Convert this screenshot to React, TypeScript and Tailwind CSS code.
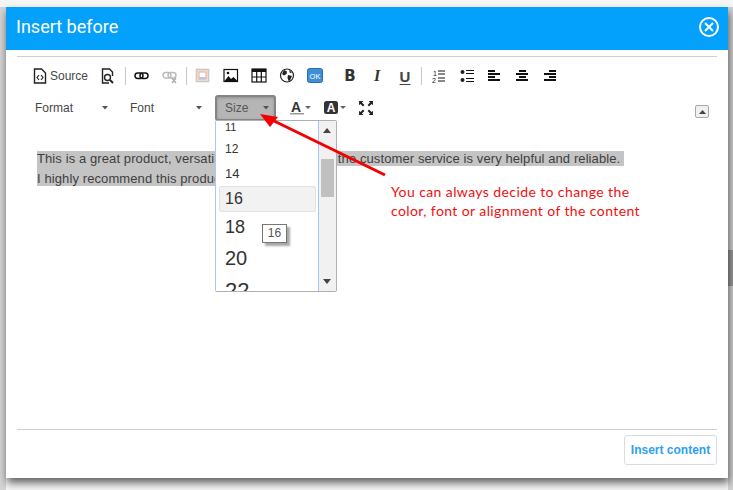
import React from "react";

const sans = "font-['Liberation_Sans',Arial,sans-serif]";

function Caret({ className = "" }: { className?: string }) {
  return (
    <svg width="7" height="4" viewBox="0 0 7 4" className={className}>
      <path d="M0 0h6L3 3.5z" fill="#555" />
    </svg>
  );
}

function Sep({ x }: { x: number }) {
  return <span className="w-px h-[18px] bg-[#c9c9c9] shrink-0" style={{ marginLeft: x }} />;
}

function Ic({ x, children, w = 16 }: { x: number; children: React.ReactNode; w?: number }) {
  return (
    <svg width={w} height="16" viewBox={`0 0 ${w} 16`} style={{ marginLeft: x }} className="shrink-0">
      {children}
    </svg>
  );
}

function Align({ x, rows }: { x: number; rows: [number, number][] }) {
  return (
    <Ic x={x} w={13}>
      {rows.map(([a, b], i) => (
        <rect key={i} x={a} y={2 + i * 3} width={b} height="2" fill="#111" />
      ))}
    </Ic>
  );
}

export default function App() {
  return (
    <div className={`relative w-[733px] h-[490px] overflow-hidden bg-[#f6f6f6] ${sans}`}>
      <div className="absolute left-0 top-[7px] bottom-0 w-[6px] bg-[#d4d4d4]" />
      <div className="absolute right-0 top-[7px] bottom-0 w-[5px] bg-[#d2d2d2]" />
      <div className="absolute right-0 top-[250px] h-[36px] w-[5px] bg-[#9a9a9a]" />
      <div className="pt-[7px] pl-[6px]">
        <div className="relative w-[722px] h-[471px] flex flex-col bg-white shadow-[1px_5px_8px_rgba(0,0,0,0.6)]">
          <div className="h-[43px] bg-[#03a1fb] flex items-center justify-between pl-[10px] pr-[8px] shrink-0">
            <span className="text-white text-[18px] font-['Roboto',sans-serif] -mt-[4px]">Insert before</span>
            <svg width="22" height="22" viewBox="0 0 22 22" className="-mt-[3px]">
              <circle cx="11" cy="11" r="9" fill="none" stroke="#fff" strokeWidth="2" />
              <path d="M7 7l8 8M15 7l-8 8" stroke="#fff" strokeWidth="2" />
            </svg>
          </div>
          <div className="flex-1 flex flex-col mx-[11px] min-h-0">
            <div className="mt-[6px] h-px bg-[#cfcfcf] shrink-0" />
            <div className="flex items-center h-[20px] mt-[9px] pl-[15px] shrink-0">
              <Ic x={0}>
                <path d="M2.500 1h7l4 4v10h-11z" fill="none" stroke="#222" strokeWidth="1.400" />
                <path d="M7 7L5 9.500 7 12M9 7l2 2.500L9 12" fill="none" stroke="#222" strokeWidth="1.200" />
              </Ic>
              <span className="ml-[2px] w-[38px] text-[12px] text-[#474747]">Source</span>
              <Ic x={12}>
                <path d="M9 15H2.500V1h7l3 3v4" fill="none" stroke="#222" strokeWidth="1.400" />
                <circle cx="7.500" cy="9.500" r="3" fill="none" stroke="#222" strokeWidth="1.400" />
                <path d="M10 12l3 3" stroke="#222" strokeWidth="2" />
              </Ic>
              <Sep x={9} />
              <Ic x={8}>
                <rect x="1" y="5" width="8" height="5.500" rx="2.700" fill="none" stroke="#111" strokeWidth="1.500" />
                <rect x="6" y="5" width="8" height="5.500" rx="2.700" fill="none" stroke="#111" strokeWidth="1.500" />
              </Ic>
              <Ic x={12}>
                <rect x="1" y="4.500" width="8" height="5.500" rx="2.700" fill="none" stroke="#bbb" strokeWidth="1.400" />
                <rect x="6" y="4.500" width="8" height="5.500" rx="2.700" fill="none" stroke="#bbb" strokeWidth="1.400" />
                <path d="M10 10l4 5M14 10l-4 5" stroke="#aaa" strokeWidth="1.300" />
              </Ic>
              <Sep x={8} />
              <Ic x={8}>
                <rect x="1.500" y="1.500" width="12" height="12" fill="#fbe3d0" stroke="#c8c8c8" strokeWidth="1.600" />
                <rect x="4" y="4" width="7" height="7" fill="#fff" stroke="#f2a49a" />
                <path d="M4 9h7v2H4z" fill="#a8cdea" />
              </Ic>
              <Ic x={12}>
                <rect x="1" y="1.500" width="13.500" height="12" fill="#fff" stroke="#111" strokeWidth="1.200" />
                <path d="M1.500 13l4-5 2.500 3 2.500-2 4 4z" fill="#111" />
                <circle cx="5" cy="5" r="1.300" fill="#111" />
              </Ic>
              <Ic x={12}>
                <rect x="1" y="1" width="14" height="13" fill="#fff" stroke="#111" strokeWidth="1.200" />
                <rect x="1" y="1" width="14" height="3" fill="#111" />
                <path d="M5.700 4v10M10.300 4v10M1 9h14" stroke="#111" strokeWidth="1.200" />
              </Ic>
              <Ic x={12}>
                <circle cx="8" cy="7.500" r="6.500" fill="#fff" stroke="#222" strokeWidth="1.200" />
                <path d="M5 2l3 1.500-.5 2.500L5 7.500 3 6zM9 7l4 1-2 4.500-1.500.5-1-3zM10 2l3 2.500-2 .5z" fill="#222" />
              </Ic>
              <Ic x={12}>
                <rect x="0.500" y="0.500" width="15" height="14" rx="2" fill="#3f8fd6" stroke="#2a6fb0" />
                <text x="8" y="10.500" textAnchor="middle" fontSize="7.500" fill="#fff" fontFamily="Liberation Sans">OK</text>
              </Ic>
              <span className="ml-[19px] w-[16px] text-center text-[15px] leading-none font-bold text-[#333] font-['DejaVu_Sans',sans-serif]">B</span>
              <span className="ml-[11px] w-[16px] text-center text-[16px] leading-none font-bold italic text-[#333] font-['Liberation_Serif',serif]">I</span>
              <span className="ml-[12px] w-[16px] text-center text-[15px] leading-none font-bold text-[#444] underline underline-offset-2">U</span>
              <Sep x={8} />
              <Ic x={10} w={14}>
                <text x="1" y="7.500" fontSize="7" fill="#111" fontFamily="Liberation Sans">1</text>
                <text x="0" y="15" fontSize="7" fill="#111" fontFamily="Liberation Sans">2</text>
                <path d="M6 3h7M6 6h7M6 10h7M6 13h7" stroke="#111" strokeWidth="1" />
              </Ic>
              <Ic x={14} w={14}>
                <circle cx="2.500" cy="4" r="2" fill="#222" />
                <circle cx="2.500" cy="12" r="2" fill="#222" />
                <path d="M6 2.500h8M6 5.500h8M6 10.500h8M6 13.500h8" stroke="#111" strokeWidth="1" />
              </Ic>
              <Align x={14} rows={[[0, 7], [0, 12], [0, 7], [0, 12]]} />
              <Align x={15} rows={[[3, 7], [0, 12], [3, 7], [0, 12]]} />
              <Align x={15} rows={[[5, 7], [0, 12], [5, 7], [0, 12]]} />
            </div>
            <div className="relative flex items-center h-[25px] mt-[9px] pl-[18px] shrink-0 text-[12px] text-[#474747]">
              <span className="w-[67px]">Format</span>
              <Caret />
              <span className="ml-[21px] w-[66px]">Font</span>
              <Caret />
              <div className="ml-[12px] w-[61px] h-[26px] rounded-[3px] border-[2px] border-[#848484] bg-[#b5b5b5] flex items-center pl-[8px] gap-[15px] shadow-[inset_0_1px_3px_rgba(0,0,0,0.2)]">
                <span className="text-[#555]">Size</span>
                <Caret />
              </div>
              <svg width="24" height="16" viewBox="0 0 24 16" className="ml-[14px]">
                <text x="1" y="11.500" fontSize="14" fontWeight="700" fill="#333" fontFamily="Liberation Sans">A</text>
                <rect x="0" y="13" width="14" height="1.500" fill="#999" />
                <path d="M15 6h6l-3 3z" fill="#666" />
              </svg>
              <svg width="26" height="16" viewBox="0 0 26 16" className="ml-[10px]">
                <rect x="0" y="1" width="14" height="13" rx="2.500" fill="#333" />
                <text x="7" y="12" textAnchor="middle" fontSize="12" fontWeight="700" fill="#fff" fontFamily="Liberation Sans">A</text>
                <path d="M16 6h6l-3 3z" fill="#666" />
              </svg>
              <svg width="16" height="16" viewBox="0 0 15 15" className="ml-[8px]">
                <path d="M1 5V1h4L3.700 2.300 6 4.700 4.700 6 2.300 3.700zM14 5V1h-4l1.300 1.300L9 4.700 10.300 6l2.400-2.300zM1 10v4h4l-1.300-1.300L6 10.300 4.700 9l-2.400 2.300zM14 10v4h-4l1.300-1.300L9 10.300 10.300 9l2.400 2.300z" fill="#222" />
              </svg>
              <span className="ml-auto mr-[8px] mt-[8px] w-[14px] h-[13px] rounded-[2px] border border-[#a9a9a9] bg-[#f0f0f0] flex items-center justify-center">
                <svg width="7" height="4" viewBox="0 0 7 4"><path d="M3.500 0L7 4H0z" fill="#444" /></svg>
              </span>
            </div>
            <div className={`flex-1 pl-[20px] pt-[29px] text-[13px] leading-[20px] text-[#3f3f3f] tracking-[0.1px] ${sans}`}>
              <div><span className="bg-[#c4c4c4] pr-[4px]">This is a great product, versatile and easy to use &amp; the customer service is very helpful and reliable.</span></div>
              <div><span className="bg-[#c4c4c4] pt-[5px]">I highly recommend this product to everyone.</span></div>
            </div>
            <div className="h-px bg-[#cfcfcf] shrink-0" />
            <div className="h-[48px] flex justify-end pt-[5px] shrink-0">
              <button className="w-[93px] h-[30px] rounded-[3px] border border-[#dcdcdc] bg-white text-[12px] font-bold text-[#2f9ff2]">Insert content</button>
            </div>
          </div>
        </div>
      </div>

      <div className="absolute left-[215px] top-[120px] w-[122px] h-[172px] rounded-[2px] border border-[#b0b0b0] border-l-[#a6c6ff] bg-white overflow-hidden flex">
        <div className="relative w-[103px] border-r border-[#a6c6ff] overflow-hidden text-[#333]">
          <span className="absolute left-[9px] top-[0px] text-[11px] leading-[12px]">11</span>
          <span className="absolute left-[9px] top-[21px] text-[12px] leading-[14px]">12</span>
          <span className="absolute left-[9px] top-[46px] text-[13px] leading-[14px]">14</span>
          <span className="absolute left-[3px] top-[65px] w-[97px] h-[26px] rounded-[2px] border border-[#e2e2e2] bg-[#f2f2f2] pl-[5px] text-[16px] leading-[24px]">16</span>
          <span className="absolute left-[9px] top-[96px] text-[18px] leading-[20px]">18</span>
          <span className="absolute left-[9px] top-[125px] text-[20px] leading-[24px]">20</span>
          <span className="absolute left-[9px] top-[157px] text-[22px] leading-[26px]">22</span>
        </div>
        <div className="flex-1 bg-[#f1f1f1] relative">
          <svg width="8" height="5" viewBox="0 0 8 5" className="absolute left-[4px] top-[7px]"><path d="M4 0l4 5H0z" fill="#444" /></svg>
          <div className="absolute left-[2px] top-[38px] w-[13px] h-[38px] bg-[#c0c0c0]" />
          <svg width="8" height="5" viewBox="0 0 8 5" className="absolute left-[4px] bottom-[7px]"><path d="M0 0h8L4 5z" fill="#444" /></svg>
        </div>
      </div>

      <div className="absolute left-[262px] top-[224px] w-[25px] h-[19px] border border-[#777] bg-white text-[12px] leading-[17px] text-center text-[#555] shadow-[3px_3px_2px_rgba(0,0,0,0.35)]">16</div>

      <svg width="733" height="490" viewBox="0 0 733 490" className="absolute inset-0 pointer-events-none">
        <path d="M385 175L270 119" stroke="#f50000" strokeWidth="3" />
        <path d="M260 114L278 117L270 127z" fill="#f50000" />
      </svg>

      <div className="absolute left-[391px] top-[182px] text-[14px] leading-[19px] tracking-[0.4px] text-[#f01010] font-['Lato',sans-serif]">
        You can always decide to change the
        <br />
        color, font or alignment of the content
      </div>
    </div>
  );
}
